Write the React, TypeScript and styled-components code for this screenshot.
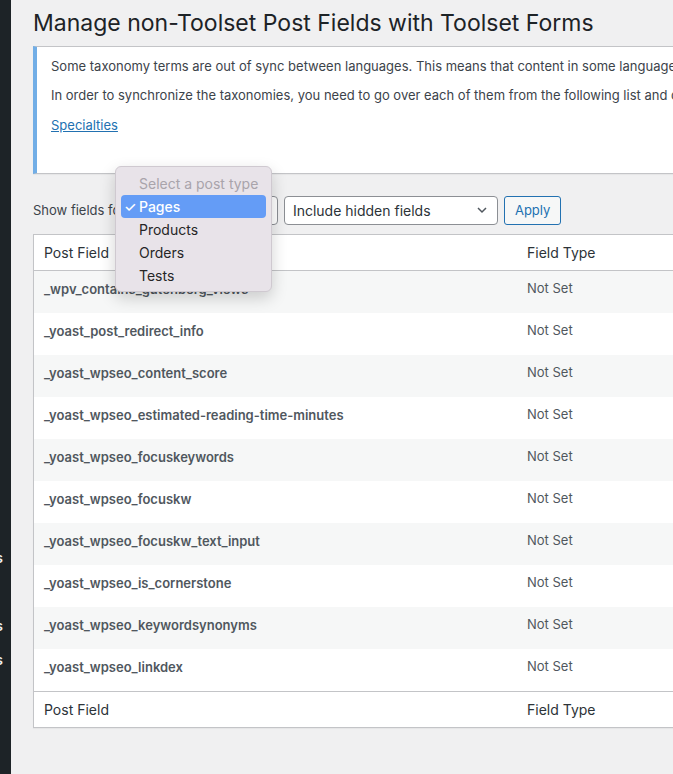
import * as React from 'react';
import styled, { createGlobalStyle } from 'styled-components';

const GlobalStyle = createGlobalStyle`
  html, body {
    margin: 0;
    padding: 0;
    background: #f0f0f1;
    overflow: hidden;
  }
  body {
    font-family: Inter, "Noto Sans", sans-serif;
    font-size: 13px;
    color: #3c434a;
  }
`;

const Page = styled.div`
  display: flex;
  width: 673px;
  height: 774px;
  overflow: hidden;
`;

const Sidebar = styled.div`
  flex: 0 0 11px;
  background: #1d2327;
  display: flex;
  flex-direction: column;
  padding-top: 540px;
  overflow: hidden;
`;

const MenuItem = styled.div`
  height: 34px;
  display: flex;
  align-items: center;
  justify-content: flex-end;
  padding-right: 8px;
  color: #f0f0f1;
  font-size: 14px;
  font-weight: 600;
  white-space: nowrap;
`;

const Content = styled.div`
  flex: 0 0 900px;
  padding: 0 0 0 22px;
  position: relative;
`;

const Title = styled.h1`
  margin: 0;
  padding: 9px 0 0;
  font-size: 23px;
  font-weight: 400;
  line-height: 29px;
  color: #1d2327;
  white-space: nowrap;
`;

const Notice = styled.div`
  margin-top: 8px;
  background: #fff;
  border: 1px solid #c3c4c7;
  border-left: 4px solid #72aee6;
  box-shadow: 0 1px 1px rgba(0, 0, 0, 0.04);
  padding: 10px 14px 30px;
  height: 86px;
`;

const NoticeText = styled.p<{ last?: boolean }>`
  margin: 0 0 ${({ last }) => (last ? 12 : 11)}px;
  line-height: 18px;
  white-space: nowrap;
  color: #3c434a;
`;

const NoticeLink = styled.a`
  color: #2271b1;
  text-decoration: underline;
  line-height: 18px;
`;

const Toolbar = styled.div`
  display: flex;
  align-items: center;
  gap: 6px;
  margin-top: 21px;
  height: 30px;
`;

const Label = styled.span`
  color: #3c434a;
  margin-right: 2px;
`;

const Select = styled.div<{ width: number }>`
  width: ${({ width }) => width}px;
  height: 29px;
  box-sizing: border-box;
  border: 1px solid #8c8f94;
  border-radius: 4px;
  background: #fff;
  display: flex;
  align-items: center;
  justify-content: space-between;
  padding: 0 8px;
  font-size: 14px;
  color: #2c3338;
`;

const ApplyButton = styled.button`
  height: 29px;
  padding: 0 10px;
  border: 1px solid #2271b1;
  border-radius: 3px;
  background: #f6f7f7;
  color: #2271b1;
  font-family: inherit;
  font-size: 13px;
`;

const Table = styled.div`
  margin-top: 9px;
  background: #fff;
  border: 1px solid #c3c4c7;
  box-shadow: 0 1px 1px rgba(0, 0, 0, 0.04);
`;

const HeadRow = styled.div<{ top?: boolean }>`
  display: grid;
  grid-template-columns: 483px 1fr;
  height: 35px;
  align-items: center;
  ${({ top }) =>
    top ? 'border-bottom: 1px solid #c3c4c7;' : 'border-top: 1px solid #c3c4c7;'}
  color: #2c3338;
  font-size: 14px;
`;

const HeadCell = styled.div`
  padding: 0 10px;
`;

const Row = styled.div<{ striped: boolean }>`
  display: grid;
  grid-template-columns: 483px 1fr;
  height: 42px;
  padding-top: 9px;
  box-sizing: border-box;
  background: ${({ striped }) => (striped ? '#f6f7f7' : '#fff')};
`;

const FieldName = styled.div`
  padding: 0 10px;
  font-weight: 600;
  color: #50575e;
  line-height: 18px;
`;

const FieldType = styled.div`
  padding: 0 10px;
  color: #50575e;
  line-height: 16px;
`;

const Popup = styled.div`
  position: absolute;
  left: 104px;
  top: 166px;
  width: 157px;
  box-sizing: border-box;
  padding: 5px 5px 4px;
  background: #e8e3e9;
  border: 1px solid #cfc9d0;
  border-radius: 6px;
  box-shadow: 0 6px 16px rgba(0, 0, 0, 0.18);
  font-size: 14px;
`;

const Option = styled.div<{ active?: boolean; muted?: boolean }>`
  position: relative;
  height: 23px;
  display: flex;
  align-items: center;
  padding-left: 18px;
  border-radius: 4px;
  background: ${({ active }) => (active ? '#649cf6' : 'transparent')};
  color: ${({ active, muted }) =>
    active ? '#fff' : muted ? '#a9a4ab' : '#262626'};
  font-weight: ${({ active }) => (active ? 500 : 400)};
`;

const Check = styled.span`
  position: absolute;
  left: 3px;
  font-size: 14px;
`;

const Chevron = () => (
  <svg width="14" height="14" viewBox="0 0 14 14" fill="none">
    <path d="M3 5l4 4 4-4" stroke="#50575e" strokeWidth="1.5" />
  </svg>
);

const fields = [
  '_wpv_contains_gutenberg_views',
  '_yoast_post_redirect_info',
  '_yoast_wpseo_content_score',
  '_yoast_wpseo_estimated-reading-time-minutes',
  '_yoast_wpseo_focuskeywords',
  '_yoast_wpseo_focuskw',
  '_yoast_wpseo_focuskw_text_input',
  '_yoast_wpseo_is_cornerstone',
  '_yoast_wpseo_keywordsynonyms',
  '_yoast_wpseo_linkdex',
];

const App: React.FC = () => {
  return (
    <>
      <GlobalStyle />
      <Page>
        <Sidebar>
          <MenuItem>Tools</MenuItem>
          <MenuItem></MenuItem>
          <MenuItem>Options</MenuItem>
          <MenuItem>Settings</MenuItem>
        </Sidebar>
        <Content>
          <Title>Manage non-Toolset Post Fields with Toolset Forms</Title>
          <Notice>
            <NoticeText>
              Some taxonomy terms are out of sync between languages. This means
              that content in some languages will not have the correct tags or
              categories.
            </NoticeText>
            <NoticeText last>
              In order to synchronize the taxonomies, you need to go over each of
              them from the following list and click the "Update taxonomy
              hierarchy" button.
            </NoticeText>
            <NoticeLink href="#">Specialties</NoticeLink>
          </Notice>
          <Toolbar>
            <Label>Show fields for:</Label>
            <Select width={141}>
              Pages
              <Chevron />
            </Select>
            <Select width={214}>
              Include hidden fields
              <Chevron />
            </Select>
            <ApplyButton>Apply</ApplyButton>
          </Toolbar>
          <Table>
            <HeadRow top>
              <HeadCell>Post Field</HeadCell>
              <HeadCell>Field Type</HeadCell>
            </HeadRow>
            {fields.map((f, i) => (
              <Row key={f} striped={i % 2 === 0}>
                <FieldName>{f}</FieldName>
                <FieldType>Not Set</FieldType>
              </Row>
            ))}
            <HeadRow>
              <HeadCell>Post Field</HeadCell>
              <HeadCell>Field Type</HeadCell>
            </HeadRow>
          </Table>
          <Popup>
            <Option muted>Select a post type</Option>
            <Option active>
              <Check>✓</Check>
              Pages
            </Option>
            <Option>Products</Option>
            <Option>Orders</Option>
            <Option>Tests</Option>
          </Popup>
        </Content>
      </Page>
    </>
  );
};

export default App;
